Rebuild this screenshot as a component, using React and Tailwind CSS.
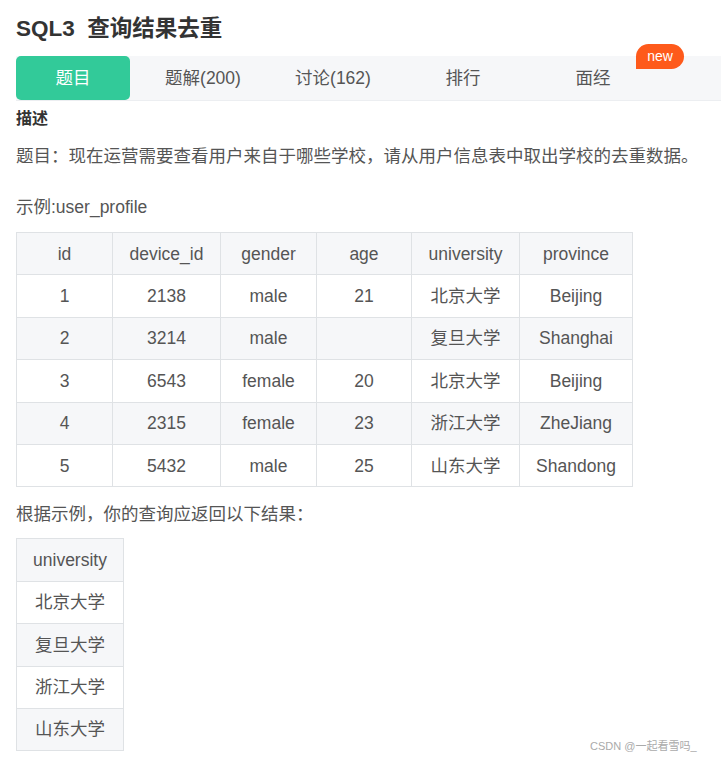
import React from "react"

const font = { fontFamily: '"Liberation Sans", Arial, "Noto Sans CJK SC", sans-serif' }

const tabs = ["题目", "题解(200)", "讨论(162)", "排行", "面经"]

const columns = ["id", "device_id", "gender", "age", "university", "province"]
const widths = ["w-[96px]", "w-[108px]", "w-[96px]", "w-[95px]", "w-[108px]", "w-[113px]"]
const rows = [
  ["1", "2138", "male", "21", "北京大学", "Beijing"],
  ["2", "3214", "male", "", "复旦大学", "Shanghai"],
  ["3", "6543", "female", "20", "北京大学", "Beijing"],
  ["4", "2315", "female", "23", "浙江大学", "ZheJiang"],
  ["5", "5432", "male", "25", "山东大学", "Shandong"],
]
const result = ["北京大学", "复旦大学", "浙江大学", "山东大学"]

export default function App() {
  return (
    <div className="min-h-screen bg-white text-[#555] relative" style={font}>
      <h1 className="pl-4 pt-[14px] h-[56px] text-[22.5px] font-bold text-[#333] leading-[30px]">
        SQL3&nbsp;&nbsp;查询结果去重
      </h1>

      <div className="ml-4 h-[45px] bg-[#f6f7f9] border-b border-[#eceef1] flex gap-4">
        {tabs.map((t, i) => (
          <div
            key={t}
            className={
              "relative w-[114px] h-[44px] flex items-center justify-center text-[17.5px] " +
              (i === 0 ? "bg-[#32ca99] text-white rounded-[5px]" : "text-[#555]")
            }
          >
            {t}
            {t === "面经" && (
              <span className="absolute left-[100px] -top-[12px] h-[25px] w-[48px] flex items-center justify-center bg-[#fe5a1b] text-white text-[14px] rounded-full rounded-bl-none">
                new
              </span>
            )}
          </div>
        ))}
      </div>

      <div className="px-4">
        <h2 className="mt-[6px] text-[16px] font-bold text-[#333] leading-[24px]">描述</h2>
        <p className="mt-[12px] text-[17.5px] leading-[26px]">
          题目：现在运营需要查看用户来自于哪些学校，请从用户信息表中取出学校的去重数据。
        </p>
        <p className="mt-[25px] text-[17.5px] leading-[26px]">示例:user_profile</p>

        <table className="mt-[12px] border-collapse text-[17.5px] text-center">
          <thead>
            <tr className="bg-[#f6f7f9]">
              {columns.map((c, i) => (
                <th key={c} className={"font-normal h-[42.4px] border border-[#dfe2e5] " + widths[i]}>
                  {c}
                </th>
              ))}
            </tr>
          </thead>
          <tbody>
            {rows.map((r, ri) => (
              <tr key={ri} className={ri % 2 === 1 ? "bg-[#f6f7f9]" : "bg-white"}>
                {r.map((v, ci) => (
                  <td key={ci} className="h-[42.4px] border border-[#dfe2e5]">
                    {v}
                  </td>
                ))}
              </tr>
            ))}
          </tbody>
        </table>

        <p className="mt-[14px] text-[17.5px] leading-[26px]">根据示例，你的查询应返回以下结果：</p>

        <table className="mt-[11px] border-collapse text-[17.5px] text-center">
          <thead>
            <tr className="bg-[#f6f7f9]">
              <th className="font-normal h-[42.4px] w-[107px] border border-[#dfe2e5]">university</th>
            </tr>
          </thead>
          <tbody>
            {result.map((u, i) => (
              <tr key={u} className={i % 2 === 1 ? "bg-[#f6f7f9]" : "bg-white"}>
                <td className="h-[42.4px] border border-[#dfe2e5]">{u}</td>
              </tr>
            ))}
          </tbody>
        </table>
      </div>

      <div className="absolute left-[590px] top-[738px] text-[11px] text-[#aaa]">CSDN @一起看雪吗_</div>
    </div>
  )
}
